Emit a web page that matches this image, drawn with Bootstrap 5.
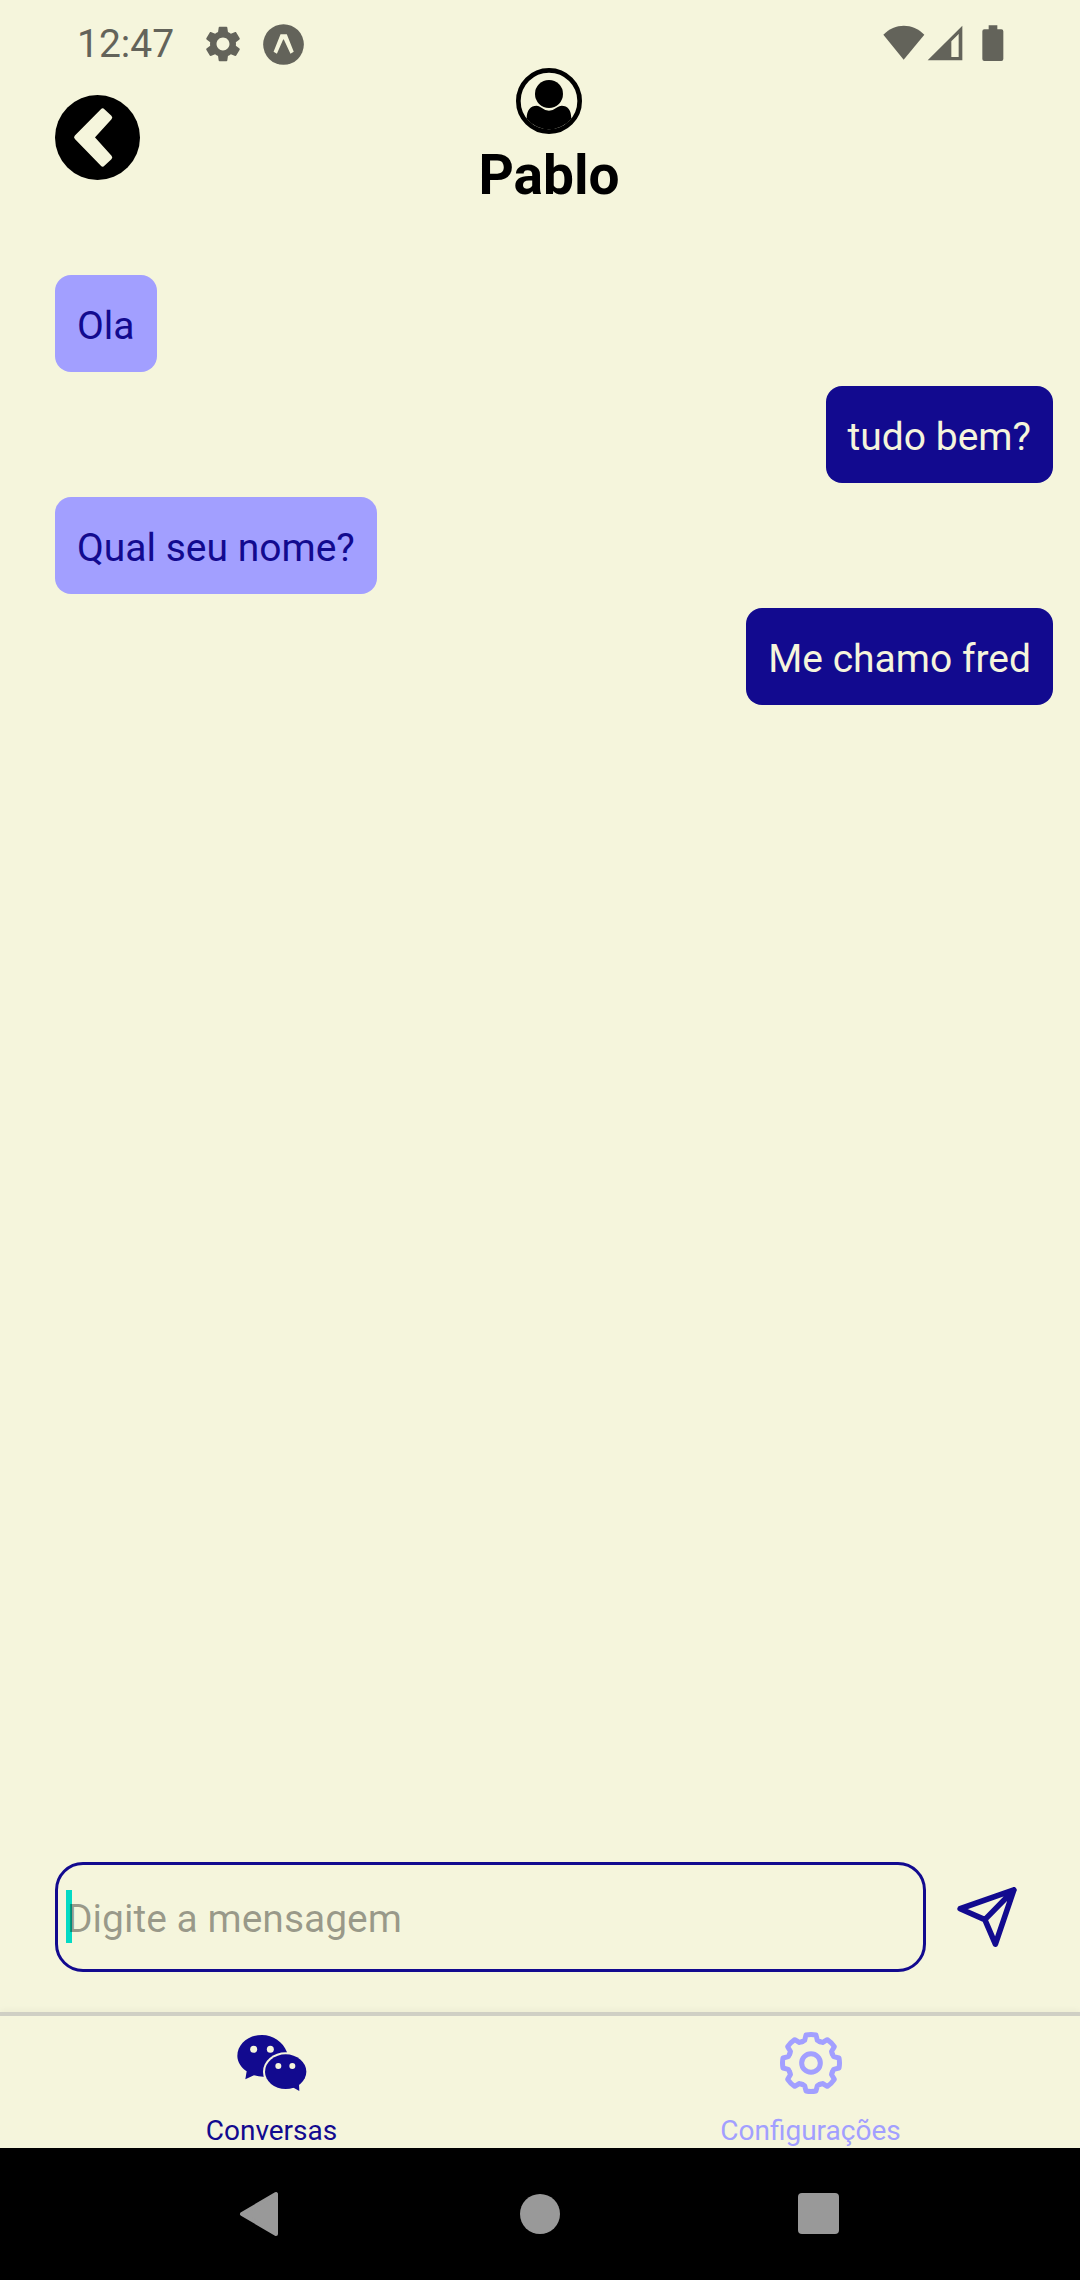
<!DOCTYPE html>
<html lang="pt-BR">
<head>
<meta charset="utf-8">
<meta name="viewport" content="width=device-width, initial-scale=1">
<title>Pablo</title>
<link href="https://cdn.jsdelivr.net/npm/bootstrap@5.3.0/dist/css/bootstrap.min.css" rel="stylesheet">
<style>
  :root { --paper: #f5f5dc; --ink: #120a8f; --soft: #a29fff; --status: #63635a; }
  body { background: var(--paper); color: #000; font-family: Roboto, "Liberation Sans", sans-serif; font-size: 39px; }
  svg { display: block; flex: none; }
  .status-bar { padding: 21px 75px 0 77px; color: var(--status); line-height: 46px; }
  .status-left { gap: 22px; }
  .clock { margin-right: 9px; }
  .chat-head { display: grid; grid-template-columns: 1fr auto 1fr; padding: 1px 37px 0 55px; }
  .contact-name { margin: 9px 0 0; font-size: 55px; font-weight: 700; line-height: 64px; }
  .thread { gap: 14px; padding: 68px 27px 0 55px; }
  .bubble { padding: 25px 22px 19px; border-radius: 16px; line-height: 53px; }
  .bubble-in { background: var(--soft); color: var(--ink); }
  .bubble-out { background: var(--ink); color: var(--paper); }
  .composer { padding: 0 63px 40px 55px; gap: 31px; }
  .caret { position: absolute; left: 11px; top: 28px; width: 6px; height: 53px; background: #03dac5; }
  .composer .form-control { position: relative; height: 110px; padding: 4px 9px 0; border: 3px solid var(--ink); border-radius: 28px; background: transparent; font-size: 39px; color: var(--ink); box-shadow: none; }
  .composer .form-control::placeholder { color: rgba(0, 0, 0, .38); opacity: 1; }
  .tabs { padding-left: 2px; border-top: 4px solid #cfcfc4; box-shadow: 0 -2px 6px rgba(0, 0, 0, .04); }
  .tab-link { padding-top: 14px; gap: 18px; color: var(--soft); font-size: 28px; line-height: 34px; }
  .tab-link.active { color: var(--ink); }
  .tab-icon { height: 66px; }
  .system-nav { height: 132px; padding: 0 240px 0 239px; background: #000; color: #999; }
</style>
</head>
<body class="d-flex flex-column min-vh-100">

<div class="status-bar d-flex justify-content-between">
  <div class="status-left d-flex align-items-center">
    <span class="clock">12:47</span>
    <svg width="36" height="36" viewBox="2 2 20 20" fill="currentColor" aria-hidden="true"><path d="M19.14 12.94c.04-.3.06-.61.06-.94 0-.32-.02-.64-.07-.94l2.03-1.58c.18-.14.23-.41.12-.61l-1.92-3.32c-.12-.22-.37-.29-.59-.22l-2.39.96c-.5-.38-1.03-.7-1.62-.94l-.36-2.54c-.04-.24-.24-.41-.48-.41h-3.84c-.24 0-.43.17-.47.41l-.36 2.54c-.59.24-1.13.57-1.62.94l-2.39-.96c-.22-.08-.47 0-.59.22L2.74 8.87c-.12.21-.08.47.12.61l2.03 1.58c-.05.3-.09.63-.09.94s.02.64.07.94l-2.03 1.58c-.18.14-.23.41-.12.61l1.92 3.32c.12.22.37.29.59.22l2.39-.96c.5.38 1.03.7 1.62.94l.36 2.54c.05.24.24.41.48.41h3.84c.24 0 .44-.17.47-.41l.36-2.54c.59-.24 1.13-.56 1.62-.94l2.39.96c.22.08.47 0 .59-.22l1.92-3.32c.12-.22.07-.47-.12-.61l-2.01-1.58zM12 15.6c-1.98 0-3.6-1.62-3.6-3.6s1.62-3.6 3.6-3.6 3.6 1.62 3.6 3.6-1.62 3.6-3.6 3.6z"/></svg>
    <svg width="41" height="41" viewBox="671 68 124 124" aria-hidden="true"><circle cx="733" cy="130" r="61.500" fill="currentColor"/><path d="M724 99h19l21 53-10 6-20-43h-2l-19 43-10-6z" fill="#f5f5dc"/></svg>
  </div>
  <svg width="122" height="46" viewBox="68 62 366 138" fill="currentColor" aria-hidden="true">
    <path d="M69 103C104 67 157 67 192 103L130 178z"/>
    <path fill-rule="evenodd" d="M202 180L306 76V180zM273 123V170H295V101z"/>
    <path d="M385 75h26v12h12q6 0 6 6v83q0 6-6 6h-51q-6 0-6-6V93q0-6 6-6h13z"/>
  </svg>
</div>

<header class="chat-head align-items-center">
  <div class="d-flex">
    <button type="button" class="btn p-0 border-0" aria-label="Voltar">
      <svg width="85" height="85" viewBox="45 285 255 255" aria-hidden="true"><circle cx="172.500" cy="412.500" r="127.500"/><path d="M110 412L188 333 209 353 155 412 209 472 188 492z" fill="#f5f5dc" stroke="#f5f5dc" stroke-width="15" stroke-linejoin="round"/></svg>
    </button>
  </div>
  <div class="d-flex flex-column align-items-center">
    <svg width="66" height="66" viewBox="228 55 198 198" aria-hidden="true"><circle cx="327" cy="154" r="92" fill="none" stroke="#000" stroke-width="14"/><circle cx="327" cy="133" r="42"/><path d="M260 207C260 181 272 168 290 168Q297 168 302 173Q327 193 352 173Q358 168 365 168C383 168 394 181 394 207A86 86 0 0 1 260 207z"/></svg>
    <h1 class="contact-name">Pablo</h1>
  </div>
</header>

<main class="thread d-flex flex-column flex-grow-1">
  <div class="bubble bubble-in align-self-start">Ola</div>
  <div class="bubble bubble-out align-self-end">tudo bem?</div>
  <div class="bubble bubble-in align-self-start">Qual seu nome?</div>
  <div class="bubble bubble-out align-self-end">Me chamo fred</div>
</main>

<form class="composer d-flex align-items-center">
  <div class="position-relative flex-grow-1">
    <span class="caret"></span>
    <input type="text" class="form-control" placeholder="Digite a mensagem" aria-label="Digite a mensagem">
  </div>
  <button type="button" class="btn p-0 border-0" aria-label="Enviar">
    <svg width="60" height="60" viewBox="230 141 181 182" fill="none" stroke="#120a8f" stroke-width="17" stroke-linejoin="round" stroke-linecap="round" aria-hidden="true"><path d="M239 207L402 150 346 314 314 240zM314 240L402 150M390 160L392 172"/></svg>
  </button>
</form>

<nav class="tabs row g-0 flex-nowrap">
  <a href="#" class="tab-link active col d-flex flex-column align-items-center text-decoration-none" aria-current="page">
    <span class="tab-icon d-flex align-items-center">
      <svg width="70" height="56" viewBox="167 105 210 168" aria-hidden="true">
        <path fill="#120a8f" d="M196 214L192 238 218 226Q235 231 251 230L300 212 317 157C305 125 275 105 242 105C201 105 168 133 168 168C168 187 181 204 196 214z"/>
        <ellipse cx="313" cy="215" rx="68" ry="58" fill="#f5f5dc"/>
        <g fill="#120a8f"><ellipse cx="313" cy="215" rx="62" ry="52"/><path d="M353 252L354 273 334 262z"/></g>
        <g fill="#f5f5dc"><circle cx="217" cy="148" r="10.500"/><circle cx="267" cy="148" r="10.500"/><circle cx="291" cy="198" r="9"/><circle cx="333" cy="198" r="9"/></g>
      </svg>
    </span>
    <span>Conversas</span>
  </a>
  <a href="#" class="tab-link col d-flex flex-column align-items-center text-decoration-none">
    <span class="tab-icon d-flex align-items-center">
      <svg width="62" height="62" viewBox="-93 -93 186 186" fill="none" stroke="#a29fff" stroke-width="15" stroke-linejoin="round" stroke-linecap="round" aria-hidden="true">
        <defs><path id="tooth" d="M-27 -64L-19 -68 -15 -84Q0 -87 15 -84L19 -68 27 -64"/></defs>
        <use href="#tooth"/><use href="#tooth" transform="rotate(45)"/><use href="#tooth" transform="rotate(90)"/><use href="#tooth" transform="rotate(135)"/><use href="#tooth" transform="rotate(180)"/><use href="#tooth" transform="rotate(225)"/><use href="#tooth" transform="rotate(270)"/><use href="#tooth" transform="rotate(315)"/>
        <circle r="28"/>
      </svg>
    </span>
    <span>Configurações</span>
  </a>
</nav>

<div class="system-nav d-flex align-items-center justify-content-between">
  <button type="button" class="btn p-0 border-0" aria-label="Sistema: voltar"><svg width="42" height="46" viewBox="0 0 42 46" fill="#999" stroke="#999" stroke-width="4" stroke-linejoin="round" aria-hidden="true"><path d="M3 23L37 3V43z"/></svg></button>
  <button type="button" class="btn p-0 border-0" aria-label="Sistema: início"><svg width="42" height="42" viewBox="0 0 42 42" fill="#999" aria-hidden="true"><circle cx="21" cy="21" r="20"/></svg></button>
  <button type="button" class="btn p-0 border-0" aria-label="Sistema: recentes"><svg width="42" height="42" viewBox="0 0 42 42" fill="#999" aria-hidden="true"><rect width="41" height="41" rx="4"/></svg></button>
</div>

<script src="https://cdn.jsdelivr.net/npm/bootstrap@5.3.0/dist/js/bootstrap.bundle.min.js"></script>
</body>
</html>
